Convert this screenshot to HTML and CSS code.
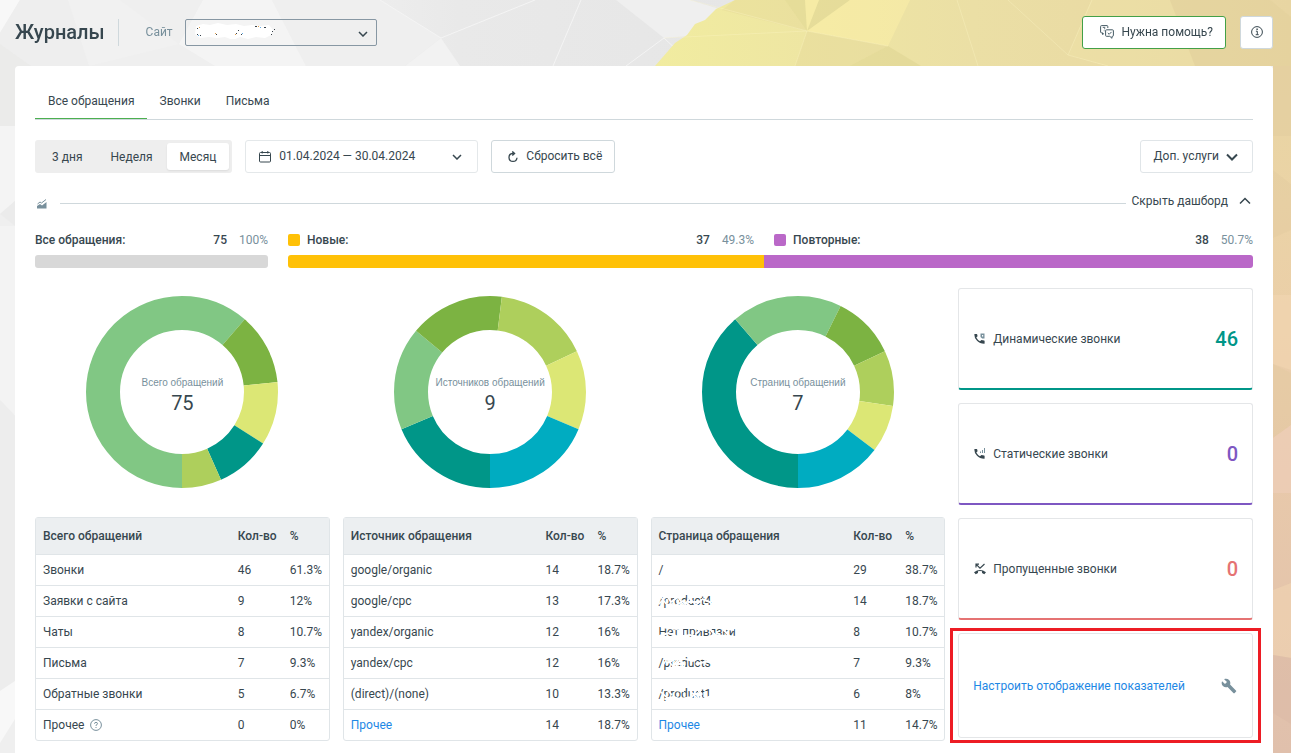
FILE: index.html
```html
<!DOCTYPE html>
<html lang="ru">
<head>
<meta charset="utf-8">
<meta name="viewport" content="width=device-width, initial-scale=1">
<title>Журналы</title>
<link rel="stylesheet" href="styles.css">
</head>
<body>
<svg class="backdrop" viewBox="0 0 1291 753" preserveAspectRatio="none" aria-hidden="true">
  <defs>
    <linearGradient id="warm" x1="0" y1="0" x2="1" y2="0">
      <stop offset="0" stop-color="#f1eca0"/><stop offset=".5" stop-color="#ebdfa5"/><stop offset="1" stop-color="#e8d5a2"/>
    </linearGradient>
    <linearGradient id="side" x1="0" y1="0" x2="0" y2="1">
      <stop offset="0" stop-color="#e8d5a2"/><stop offset=".2" stop-color="#ebd3a6"/><stop offset=".5" stop-color="#eacbaa"/><stop offset="1" stop-color="#e0c0ac"/>
    </linearGradient>
    <linearGradient id="grey" x1="0" y1="0" x2="1" y2="0">
      <stop offset="0" stop-color="#efefef"/><stop offset=".3" stop-color="#e9e9e9"/><stop offset="1" stop-color="#e6e6e6"/>
    </linearGradient>
  </defs>
  <path fill="#efefef" d="M0 0h1291v753H0z"/>
  <path fill="#f8f8f8" d="M0 0h20L0 33z"/>
  <path fill="#eeeeee" d="M20 0h48l22 66H31L0 44V33z"/>
  <path fill="#f1f1f1" d="M68 0h52l59 44-90 22z"/>
  <path fill="#f4f4f4" d="M203 0h69l34 66h-91l-36-22z"/>
  <path fill="url(#grey)" d="M380 0h355v66H340l40-28z"/>
  <path fill="#efefef" d="M330 0h50l61 38-36 28h-99l-34-66z"/>
  <path fill="#f2f2f2" d="M441 38l19 28h-55z"/>
  <path fill="#efefef" d="M616 0h74l33 10-20 25-39 3z"/>
  <path stroke="#f4f4f4" fill="none" d="M380 0l61 38 94-38M581 0l-28 66M664 38l-38 28M664 38l30 28"/>
  <path fill="#ebebea" d="M0 44l31 22v60H0z"/>
  <path fill="#f4f4f4" d="M0 126h15v75L0 214z"/>
  <path fill="#ebebeb" d="M0 214l15-13v25z"/>
  <path fill="#f3f3f3" d="M0 226h15v190L0 400z"/>
  <path fill="#ededed" d="M0 400l15 16v265L0 691z"/>
  <path fill="#f8f8f8" d="M0 691l15-10v38L0 743z"/>
  <path fill="url(#warm)" d="M735 0h556v66H655l20-23 12-8 8-11 10-4 11-11z"/>
  <g fill="#d9cf8d" opacity=".4">
    <path d="M785 0h20l2 31zM819 0h31l-43 31zM888 46l-38 20h71z"/>
  </g>
  <g fill="#fff2a9" opacity=".45">
    <path d="M807 31l43-31h60l-22 46zM805 0h14l-12 31z"/>
  </g>
  <path fill="#decf95" opacity=".25" d="M735 0h50l22 31-85-21zM807 31l81 15-38 20h-55z"/>
  <path fill="#f1e4a8" opacity=".35" d="M1091 0h79l25 66h-88l-39-11z"/>
  <path fill="#dfcf99" opacity=".35" d="M1170 0h100l21 17v49h-96z"/>
  <g stroke="#fff8c9" stroke-opacity=".3" fill="none">
    <path d="M690 0l117 31-143 7M807 31l-12 35M807 31l81 15M957 0l21 66M1008 0l60 55 40 11M1092 0l-24 55"/>
  </g>
  <path fill="url(#side)" d="M1273 66h18v687h-18z"/>
  <path fill="#dfc89f" opacity=".35" d="M1273 66h18v70h-18zM1273 170l18 14v46l-18 8zM1273 364l18 9v52l-18 13z"/>
  <path fill="#f4d7b3" opacity=".5" d="M1273 295h18v75l-18-6zM1273 590l18-7v75l-18-3z"/>
  <path fill="#f0cfbd" opacity=".5" d="M1273 438l18-13v68h-18z"/>
  <path fill="#d9b7a5" opacity=".4" d="M1273 655l18 3v66l-18-11z"/>
</svg>

<header class="topbar">
  <h1 class="title">Журналы</h1>
  <label class="site-label" for="site">Сайт</label>
  <div class="site-box">
    <select class="site-select" id="site"><option></option></select>
    <svg class="scribble" width="82" height="16" viewBox="0 0 82 16" aria-hidden="true">
      <path fill="#fff" d="M3 3l7-2 7 1 8-2 9 2 9-1 8 2 8-1 8 1 9-1 4 5-2 5-6 3-9-1-8 2-8-2-7 3-8-3-8 1-8-1-9 1-5-4z"/>
      <path fill="#364048" d="M4 5h1v1H4zM4 11h1v1H4zM7 12h1v1H7zM23 11h1v1h-1zM43 10h1v1h-1zM48 11h1v1h-1zM45 7h1v1h-1zM62 3h2v1h-2zM71 4h2v1h-2zM79 8h1v1h-1zM78 11h1v1h-1zM81 6h1v1h-1z"/>
      <path fill="#e2a04b" d="M6 4h1v1H6zM65 3h1v1h-1zM22 10h1v1h-1zM42 11h1v1h-1z"/>
      <path fill="#68aee5" d="M67 4h1v1h-1zM49 10h1v1h-1zM5 12h1v1H5z"/>
    </svg>
    <svg class="chevron site-chevron" viewBox="0 0 10 6" aria-hidden="true"><path d="M1 1l4 4 4-4"/></svg>
  </div>
  <button class="btn btn-help" type="button">
    <svg class="icon-help" viewBox="0 0 14 14" aria-hidden="true"><path d="M4 8.500L2.500 9.500V7.800H1.500Q.6 7.800.6 7V1.500Q.6.6 1.500.6H7Q7.800.6 7.800 1.500V3M3 3Q3 2.200 4 2.200T5 3Q5 3.500 4.200 4.100M4.200 5.500v.7M6.500 4.800H12.500Q13.400 4.800 13.400 5.700V10.500Q13.400 11.300 12.500 11.300H12V13.300L9.800 11.300H6.500Q5.600 11.300 5.600 10.500V5.700Q5.600 4.800 6.500 4.800ZM7.800 8L9.200 9.300 11.500 6.900"/></svg>
    Нужна помощь?
  </button>
  <button class="btn btn-info" type="button" aria-label="Информация">
    <svg class="icon-info" viewBox="0 0 12 12" aria-hidden="true"><circle cx="6" cy="6" r="5.400"/><path d="M4.900 5.200H6.300V8.600M4.700 8.700H7.700"/><path class="dot" d="M5.400 2.600h1.400v1.400H5.400z"/></svg>
  </button>
</header>

<main class="panel">
  <nav class="tabs">
    <a class="tab tab-active" href="#all">Все обращения</a>
    <a class="tab" href="#calls">Звонки</a>
    <a class="tab" href="#mails">Письма</a>
  </nav>

  <div class="toolbar">
    <div class="segments" role="group" aria-label="Период">
      <button class="segment" type="button">3 дня</button>
      <button class="segment" type="button">Неделя</button>
      <button class="segment segment-active" type="button" aria-pressed="true">Месяц</button>
    </div>
    <button class="btn btn-date" type="button">
      <svg class="icon-calendar" viewBox="0 0 12 12" aria-hidden="true"><path d="M1.500 1.500h9q1 0 1 1v7.500q0 1-1 1h-9q-1 0-1-1V2.500q0-1 1-1zM.5 4.500h11M3.200 0v2.500M8.800 0v2.500"/></svg>
      <span>01.04.2024 — 30.04.2024</span>
      <svg class="chevron date-chevron" viewBox="0 0 10 6" aria-hidden="true"><path d="M1 1l4 4 4-4"/></svg>
    </button>
    <button class="btn btn-reset" type="button">
      <svg class="icon-reset" viewBox="0 0 12 12" aria-hidden="true"><path d="M6.500 2.500H5.500A4 4 0 1 0 10 6.800M5.300.4L7.600 2.500 5.300 4.600"/></svg>
      Сбросить всё
    </button>
    <button class="btn btn-extra" type="button">
      Доп. услуги
      <svg class="chevron chevron-large" viewBox="0 0 12 8" aria-hidden="true"><path d="M1 1.500l5 5 5-5"/></svg>
    </button>
  </div>

  <div class="divider">
    <svg class="icon-chart" viewBox="0 0 10 10" aria-hidden="true"><path fill="#78909c" d="M0 9.500V7l3-2 2 1.500L9.500 3v6.500z"/><path fill="none" stroke="#78909c" d="M.5 5L3 3l1.500 1L9 .5"/></svg>
    <span class="divider-line"></span>
    <button class="toggle" type="button">Скрыть дашборд
      <svg class="chevron chevron-toggle" viewBox="0 0 12 8" aria-hidden="true"><path d="M1 6.500l5-5 5 5"/></svg>
    </button>
  </div>

  <section class="summary">
    <div class="meter meter-all">
      <div class="meter-head"><span class="meter-name">Все обращения:</span><span class="meter-count">75</span><span class="meter-share">100%</span></div>
      <div class="bar"></div>
    </div>
    <div class="split">
      <div class="meter meter-new">
        <div class="meter-head"><span class="swatch"></span><span class="meter-name">Новые:</span><span class="meter-count">37</span><span class="meter-share">49.3%</span></div>
        <div class="bar"></div>
      </div>
      <div class="meter meter-repeat">
        <div class="meter-head"><span class="swatch"></span><span class="meter-name">Повторные:</span><span class="meter-count">38</span><span class="meter-share">50.7%</span></div>
        <div class="bar"></div>
      </div>
    </div>
  </section>

  <section class="dashboard">
    <div class="column">
      <figure class="donut">
        <svg class="ring" viewBox="0 0 192 192" aria-hidden="true"><g transform="rotate(90 96 96)">
          <circle class="c-mint" cx="96" cy="96" r="79" pathLength="75" stroke-dasharray="46 75"/>
          <circle class="c-green" cx="96" cy="96" r="79" pathLength="75" stroke-dasharray="9 75" stroke-dashoffset="-46"/>
          <circle class="c-lemon" cx="96" cy="96" r="79" pathLength="75" stroke-dasharray="8 75" stroke-dashoffset="-55"/>
          <circle class="c-teal" cx="96" cy="96" r="79" pathLength="75" stroke-dasharray="7 75" stroke-dashoffset="-63"/>
          <circle class="c-lime" cx="96" cy="96" r="79" pathLength="75" stroke-dasharray="5 75" stroke-dashoffset="-70"/>
        </g></svg>
        <figcaption class="donut-text"><span class="donut-label">Всего обращений</span><span class="donut-value">75</span></figcaption>
      </figure>
      <table class="grid">
        <thead><tr><th>Всего обращений</th><th class="col-count">Кол-во</th><th class="col-share">%</th></tr></thead>
        <tbody>
          <tr><td>Звонки</td><td>46</td><td>61.3%</td></tr>
          <tr><td>Заявки с сайта</td><td>9</td><td>12%</td></tr>
          <tr><td>Чаты</td><td>8</td><td>10.7%</td></tr>
          <tr><td>Письма</td><td>7</td><td>9.3%</td></tr>
          <tr><td>Обратные звонки</td><td>5</td><td>6.7%</td></tr>
          <tr><td><span class="with-hint">Прочее <svg class="icon-hint" viewBox="0 0 12 12" aria-hidden="true"><circle cx="6" cy="6" r="5.400"/><path d="M4.500 4.700Q4.500 3.400 6 3.400T7.500 4.700Q7.500 5.500 6 6.300V7M6 8V9"/></svg></span></td><td>0</td><td>0%</td></tr>
        </tbody>
      </table>
    </div>

    <div class="column">
      <figure class="donut">
        <svg class="ring" viewBox="0 0 192 192" aria-hidden="true"><g transform="rotate(90 96 96)">
          <circle class="c-teal" cx="96" cy="96" r="79" pathLength="75" stroke-dasharray="14 75"/>
          <circle class="c-mint" cx="96" cy="96" r="79" pathLength="75" stroke-dasharray="13 75" stroke-dashoffset="-14"/>
          <circle class="c-green" cx="96" cy="96" r="79" pathLength="75" stroke-dasharray="12 75" stroke-dashoffset="-27"/>
          <circle class="c-lime" cx="96" cy="96" r="79" pathLength="75" stroke-dasharray="12 75" stroke-dashoffset="-39"/>
          <circle class="c-lemon" cx="96" cy="96" r="79" pathLength="75" stroke-dasharray="10 75" stroke-dashoffset="-51"/>
          <circle class="c-cyan" cx="96" cy="96" r="79" pathLength="75" stroke-dasharray="14 75" stroke-dashoffset="-61"/>
        </g></svg>
        <figcaption class="donut-text"><span class="donut-label">Источников обращений</span><span class="donut-value">9</span></figcaption>
      </figure>
      <table class="grid">
        <thead><tr><th>Источник обращения</th><th class="col-count">Кол-во</th><th class="col-share">%</th></tr></thead>
        <tbody>
          <tr><td>google/organic</td><td>14</td><td>18.7%</td></tr>
          <tr><td>google/cpc</td><td>13</td><td>17.3%</td></tr>
          <tr><td>yandex/organic</td><td>12</td><td>16%</td></tr>
          <tr><td>yandex/cpc</td><td>12</td><td>16%</td></tr>
          <tr><td>(direct)/(none)</td><td>10</td><td>13.3%</td></tr>
          <tr><td><a class="link" href="#sources">Прочее</a></td><td>14</td><td>18.7%</td></tr>
        </tbody>
      </table>
    </div>

    <div class="column">
      <figure class="donut">
        <svg class="ring" viewBox="0 0 192 192" aria-hidden="true"><g transform="rotate(90 96 96)">
          <circle class="c-teal" cx="96" cy="96" r="79" pathLength="75" stroke-dasharray="29 75"/>
          <circle class="c-mint" cx="96" cy="96" r="79" pathLength="75" stroke-dasharray="14 75" stroke-dashoffset="-29"/>
          <circle class="c-green" cx="96" cy="96" r="79" pathLength="75" stroke-dasharray="8 75" stroke-dashoffset="-43"/>
          <circle class="c-lime" cx="96" cy="96" r="79" pathLength="75" stroke-dasharray="7 75" stroke-dashoffset="-51"/>
          <circle class="c-lemon" cx="96" cy="96" r="79" pathLength="75" stroke-dasharray="6 75" stroke-dashoffset="-58"/>
          <circle class="c-cyan" cx="96" cy="96" r="79" pathLength="75" stroke-dasharray="11 75" stroke-dashoffset="-64"/>
        </g></svg>
        <figcaption class="donut-text"><span class="donut-label">Страниц обращений</span><span class="donut-value">7</span></figcaption>
      </figure>
      <table class="grid">
        <thead><tr><th>Страница обращения</th><th class="col-count">Кол-во</th><th class="col-share">%</th></tr></thead>
        <tbody>
          <tr><td>/</td><td>29</td><td>38.7%</td></tr>
          <tr><td><span class="erased">/product4<svg class="eraser" viewBox="0 0 80 14" preserveAspectRatio="none" aria-hidden="true"><path d="M0 10L12 2 18 8 29 3 38 12 46 4 56 11 66 5 80 9M3 3l9 8 9-1M22 13l14-6 16 7 20-2M44 8h14M42 12h36M0 2h40"/></svg></span></td><td>14</td><td>18.7%</td></tr>
          <tr><td><span class="erased">Нет привязки<svg class="eraser" viewBox="0 0 80 14" preserveAspectRatio="none" aria-hidden="true"><path d="M0 11l10-3 10 4 12-2 14 3 12-3 22 2M2 2l16 2 14-2 12 3 14-3 20 3M38 9l4-3M5 13h60M24 4v9M52 3l8 9M66 4l8 8"/></svg></span></td><td>8</td><td>10.7%</td></tr>
          <tr><td><span class="erased">/products<svg class="eraser" viewBox="0 0 80 14" preserveAspectRatio="none" aria-hidden="true"><path d="M4 11l8-8 9 7 9-7 9 5M24 12l8-8 6 9M40 3l12 2 10-3 18 3M12 7l11-3M22 8h18M20 11h20M56 8l22-3"/></svg></span></td><td>7</td><td>9.3%</td></tr>
          <tr><td><span class="erased">/product1<svg class="eraser" viewBox="0 0 80 14" preserveAspectRatio="none" aria-hidden="true"><path d="M1 4l12 7 9-1 10 2 18-2 8-8 8 10 14-3M12 3l8 5M47 4l12 8 4-8M20 3l18 1M8 12h20M52 7h14M50 12h20"/></svg></span></td><td>6</td><td>8%</td></tr>
          <tr><td><a class="link" href="#pages">Прочее</a></td><td>11</td><td>14.7%</td></tr>
        </tbody>
      </table>
    </div>

    <aside class="cards">
      <div class="card card-teal">
        <svg class="icon-phone" viewBox="0 0 12 12" aria-hidden="true"><path d="M.3 1.500Q.3 1 .8 1H2.700q.4 0 .5.5l.4 1.700-1.300 1.400q1.300 2.600 3.700 3.700L7.400 7l2.700.6q.5.1.5.5v2.200q0 .5-.5.5Q5.800 10.800 3 7.800.3 5.200.3 1.500z"/><path class="soft" d="M6.500.5h4v5H8.200L6.500 4zM8 2v1.500h1.200V2z" fill-rule="evenodd"/></svg>
        <span class="card-name">Динамические звонки</span><span class="card-value">46</span>
      </div>
      <div class="card card-violet">
        <svg class="icon-phone" viewBox="0 0 12 12" aria-hidden="true"><path d="M.3 1.500Q.3 1 .8 1H2.700q.4 0 .5.5l.4 1.700-1.300 1.400q1.300 2.600 3.700 3.700L7.400 7l2.700.6q.5.1.5.5v2.200q0 .5-.5.5Q5.800 10.800 3 7.800.3 5.200.3 1.500z"/><path class="soft" d="M6 3.500h1V5H6zM8 2h1v3H8zM10 0h1v5h-1z"/></svg>
        <span class="card-name">Статические звонки</span><span class="card-value">0</span>
      </div>
      <div class="card card-red">
        <svg class="icon-phone" viewBox="0 0 12 12" aria-hidden="true"><path d="M0 9.300Q6 4.500 12 9.300L10.300 11.300 8 9.900V8.300Q6 7.700 4 8.300V9.900L1.700 11.300z"/><path fill="none" stroke="#37474f" stroke-width="1.200" d="M2 4.500V1.200H5M2.200 1.400L6 5.200 10.500 1"/></svg>
        <span class="card-name">Пропущенные звонки</span><span class="card-value">0</span>
      </div>
      <div class="card card-setup">
        <a class="link card-name" href="#setup">Настроить отображение показателей</a>
        <svg class="icon-wrench" viewBox="0 0 24 24" aria-hidden="true"><path d="M22.700 19l-9.100-9.100c.9-2.300.4-5-1.500-6.900-2-2-5-2.400-7.400-1.300L9 6 6 9 1.600 4.700C.4 7.100.9 10.100 2.900 12.100c1.900 1.900 4.600 2.400 6.900 1.500l9.100 9.100c.4.4 1 .4 1.400 0l2.300-2.300c.5-.4.5-1.100.1-1.400z"/></svg>
      </div>
    </aside>
  </section>
</main>
</body>
</html>
```
FILE: styles.css
```css
* { box-sizing: border-box; }

body {
  margin: 0;
  min-height: 100vh;
  display: flex;
  flex-direction: column;
  font: 12px/20px Roboto, "Noto Sans", sans-serif;
  color: #37474f;
  background: #f0f0f0;
}

button, select { font: inherit; color: inherit; }
button { cursor: pointer; }

.backdrop { position: fixed; inset: 0; width: 100%; height: 100%; z-index: -1; }

.chevron { width: 10px; height: 6px; fill: none; stroke: #37474f; stroke-width: 1.5; }
.chevron-large, .chevron-toggle { width: 12px; height: 8px; }
.chevron-large { stroke-width: 2; }

/* Top bar */
.topbar { display: flex; align-items: center; height: 66px; padding: 0 18px 2px 15px; }
.title { margin: 0; padding-right: 13px; border-right: 1px solid #cfd8dc; font-size: 20px; font-weight: 500; line-height: 27px; }
.site-label { padding: 0 12px 0 27px; color: #78909c; }
.site-box { position: relative; width: 192px; height: 27px; }
.site-select { display: block; appearance: none; width: 100%; height: 100%; border: 1px solid #8797a3; border-radius: 2px; background: transparent; }
.scribble { position: absolute; left: 8px; top: 4px; pointer-events: none; }
.site-chevron { position: absolute; right: 9px; top: 12px; pointer-events: none; }

.btn { display: flex; align-items: center; height: 33px; padding: 0 12px 2px 13px; border: 1px solid #cfd8dc; border-radius: 3px; background: #fff; white-space: nowrap; }
.btn-help { margin-left: auto; padding: 0 12px 0 17px; gap: 8px; border-color: #43a047; }
.btn-info { margin-left: 14px; width: 33px; padding: 0; justify-content: center; }
.icon-help { width: 14px; height: 14px; fill: none; stroke: #455a64; }
.icon-info { width: 12px; height: 12px; fill: none; stroke: #37474f; }
.icon-info .dot { fill: #37474f; stroke: none; }

/* Panel */
.panel { flex: 1; margin: 0 18px 0 15px; padding: 20px 20px 12px; border-radius: 4px 4px 0 0; background: #fff; }

.tabs { display: flex; border-bottom: 1px solid #cfd8dc; }
.tab { padding: 5px 12px 7px 13px; border-bottom: 1px solid transparent; color: inherit; text-decoration: none; }
.tab-active { border-color: #4caf50; }

.toolbar { display: flex; gap: 13px; margin-top: 20px; }
.segments { display: flex; padding: 3px; border-radius: 3px; background: #eeeeee; }
.segment { padding: 0 14px; border: 0; border-radius: 3px; background: transparent; }
.segment-active { padding: 0 13px; background: #fff; box-shadow: 0 1px 2px rgba(0, 0, 0, .08); }
.btn-date { width: 233px; gap: 8px; border-color: #e4e8ea; }
.date-chevron { margin: 2px 3px 0 auto; }
.icon-calendar { width: 12px; height: 12px; margin-top: 2px; fill: none; stroke: #37474f; }
.btn-reset { gap: 7px; padding-left: 15px; }
.icon-reset { width: 12px; height: 12px; margin-top: 2px; fill: none; stroke: #37474f; stroke-width: 1.3; }
.btn-extra { margin-left: auto; gap: 7px; padding-right: 14px; border-color: #e0e5e8; }
.chevron-large { margin-top: 2px; }

.divider { display: flex; align-items: center; margin-top: 18px; }
.icon-chart { width: 10px; height: 10px; margin: 5px 13px 0 2px; }
.divider-line { flex: 1; height: 1px; margin-top: 5px; background: #cfd8dc; }
.toggle { display: flex; align-items: center; gap: 11px; padding: 0 2px 0 6px; border: 0; background: none; line-height: 20px; }

/* Totals */
.summary { display: grid; grid-template-columns: 233fr 965fr; gap: 20px; margin-top: 19px; }
.split { display: grid; grid-template-columns: 37fr 38fr; }
.meter-head { display: flex; align-items: center; margin-bottom: 5px; }
.meter-name, .meter-count { font-weight: 500; }
.meter-count { margin-left: auto; }
.meter-share { margin-left: 12px; color: #78909c; }
.swatch { width: 12px; height: 12px; margin-right: 7px; border-radius: 2px; }
.bar { height: 13px; border-radius: 3px; background: #d8d8d8; }
.meter-new .meter-head { padding-right: 10px; }
.meter-new .swatch, .meter-new .bar { background: #ffc107; }
.meter-new .bar { border-radius: 3px 0 0 3px; }
.meter-repeat .meter-head { padding-left: 10px; }
.meter-repeat .swatch, .meter-repeat .bar { background: #ba68c8; }
.meter-repeat .bar { border-radius: 0 3px 3px 0; }

/* Dashboard */
.dashboard { display: grid; grid-template-columns: repeat(4, 1fr); gap: 13px; margin-top: 20px; }
.donut { display: grid; justify-content: center; align-items: center; margin: 8px 0 29px; }
.ring, .donut-text { grid-area: 1 / 1; }
.ring { width: 192px; height: 192px; fill: none; stroke-width: 34; }
.c-mint { stroke: #81c784; }
.c-green { stroke: #7cb342; }
.c-lemon { stroke: #dce775; }
.c-teal { stroke: #009688; }
.c-lime { stroke: #aecf5c; }
.c-cyan { stroke: #00acc1; }
.donut-text { display: flex; flex-direction: column; align-items: center; padding-top: 6px; }
.donut-label { font: 10px/16px "Liberation Sans", Arial, sans-serif; color: #78909c; }
.donut-value { font-size: 20px; line-height: 24px; }

.grid { width: 100%; border: 1px solid #e0e5e8; border-radius: 3px; border-spacing: 0; table-layout: fixed; }
.grid th, .grid td { padding: 0 0 0 7px; text-align: left; white-space: nowrap; }
.grid th { height: 36px; font-weight: 500; background: #eceff1; }
.grid td { height: 31px; border-top: 1px solid #e0e5e8; }
.grid .col-count { width: 52px; }
.grid .col-share { width: 46px; }
.link { color: #1e88e5; text-decoration: none; }
.with-hint { display: flex; align-items: center; gap: 6px; }
.icon-hint { width: 12px; height: 12px; fill: none; stroke: #78909c; }
.erased { position: relative; }
.eraser { position: absolute; left: 0; top: 0; width: 100%; height: 14px; fill: none; stroke: #fff; stroke-width: 2; }

.cards { display: grid; grid-template-rows: repeat(3, 102px) 105px; gap: 13px; }
.card { position: relative; display: flex; align-items: center; padding: 0 14px; border: 1px solid #e4e6e8; border-radius: 3px; }
.card-value { margin-left: auto; font-size: 20px; font-weight: 500; }
.icon-phone { width: 12px; height: 12px; margin: 0 7px 0 1px; fill: #37474f; }
.icon-phone .soft { fill: #78909c; }
.card-teal { border-bottom: 2px solid #009688; }
.card-teal .card-value { color: #009688; }
.card-violet { border-bottom: 2px solid #7e57c2; }
.card-violet .card-value { color: #7e57c2; }
.card-red { border-bottom: 2px solid #e57373; }
.card-red .card-value { color: #e57373; }
.card-setup::after { content: ""; position: absolute; inset: -6px -9px; border: 3px solid #ed1c24; pointer-events: none; }
.icon-wrench { width: 16px; height: 16px; margin: 0 1px 0 auto; fill: #78909c; }
```
